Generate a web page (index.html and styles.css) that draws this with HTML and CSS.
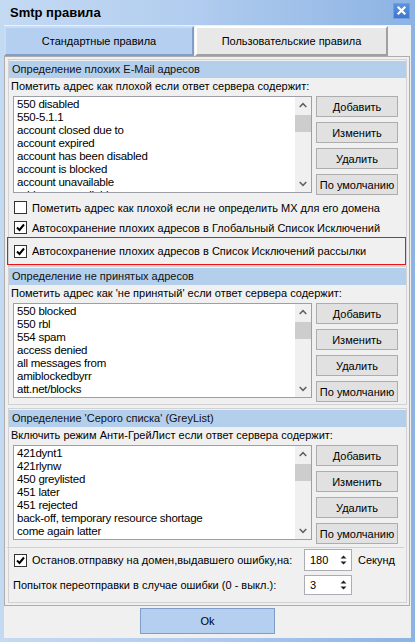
FILE: index.html
```html
<!DOCTYPE html>
<html lang="ru">
<head>
<meta charset="utf-8">
<title>Smtp правила</title>
<link rel="stylesheet" href="styles.css">
</head>
<body>
<div class="window">
  <div class="titlebar">
    <span class="title">Smtp правила</span>
    <span class="close">
      <svg width="17" height="16" viewBox="0 0 17 16"><path d="M5.5 4.5 L11.5 10.5 M11.5 4.5 L5.5 10.5" stroke="#fff" stroke-width="2.2" stroke-linecap="square"/></svg>
    </span>
  </div>
  <div class="client">
    <div class="tabs">
      <div class="tab tab-active">Стандартные правила</div>
      <div class="tab">Пользовательские правила</div>
    </div>
    <div class="page">
      <section class="group g1">
        <div class="ghead">Определение плохих E-Mail адресов</div>
        <div class="glabel">Пометить адрес как плохой если ответ сервера содержит:</div>
        <div class="listrow">
          <div class="listbox lb1">
            <ul class="items">
              <li>550 disabled</li>
              <li>550-5.1.1</li>
              <li>account closed due to</li>
              <li>account expired</li>
              <li>account has been disabled</li>
              <li>account is blocked</li>
              <li>account unavailable</li>
              <li>address unavailable</li>
            </ul>
            <div class="scroll">
              <svg class="chev" width="17" height="17" viewBox="0 0 17 17"><path d="M5 10 L8.5 6.5 L12 10" fill="none" stroke="#606060" stroke-width="1.6"/></svg>
              <div class="thumb"></div>
              <div class="track"></div>
              <svg class="chev" width="17" height="17" viewBox="0 0 17 17"><path d="M5 7 L8.5 10.5 L12 7" fill="none" stroke="#606060" stroke-width="1.6"/></svg>
            </div>
          </div>
          <div class="buttons">
            <button class="btn">Добавить</button>
            <button class="btn">Изменить</button>
            <button class="btn">Удалить</button>
            <button class="btn">По умолчанию</button>
          </div>
        </div>
        <label class="check row1"><span class="cb"></span>Пометить адрес как плохой если не определить MX для его домена</label>
        <label class="check row2"><span class="cb"><svg width="11" height="11" viewBox="0 0 11 11"><path d="M2 5.5 L4.5 8 L9 2.5" fill="none" stroke="#000" stroke-width="2"/></svg></span>Автосохранение плохих адресов в Глобальный Список Исключений</label>
        <label class="check hl"><span class="cb"><svg width="11" height="11" viewBox="0 0 11 11"><path d="M2 5.5 L4.5 8 L9 2.5" fill="none" stroke="#000" stroke-width="2"/></svg></span>Автосохранение плохих адресов в Список Исключений рассылки</label>
      </section>

      <section class="group g2">
        <div class="ghead">Определение не принятых адресов</div>
        <div class="glabel">Пометить адрес как 'не принятый' если ответ сервера содержит:</div>
        <div class="listrow">
          <div class="listbox lb2">
            <ul class="items">
              <li>550 blocked</li>
              <li>550 rbl</li>
              <li>554 spam</li>
              <li>access denied</li>
              <li>all messages from</li>
              <li>amiblockedbyrr</li>
              <li>att.net/blocks</li>
              <li>banned by policy</li>
            </ul>
            <div class="scroll">
              <svg class="chev" width="17" height="17" viewBox="0 0 17 17"><path d="M5 10 L8.5 6.5 L12 10" fill="none" stroke="#606060" stroke-width="1.6"/></svg>
              <div class="thumb"></div>
              <div class="track"></div>
              <svg class="chev" width="17" height="17" viewBox="0 0 17 17"><path d="M5 7 L8.5 10.5 L12 7" fill="none" stroke="#606060" stroke-width="1.6"/></svg>
            </div>
          </div>
          <div class="buttons">
            <button class="btn">Добавить</button>
            <button class="btn">Изменить</button>
            <button class="btn">Удалить</button>
            <button class="btn">По умолчанию</button>
          </div>
        </div>
      </section>

      <section class="group g3">
        <div class="ghead">Определение 'Серого списка' (GreyList)</div>
        <div class="glabel">Включить режим Анти-ГрейЛист если ответ сервера содержит:</div>
        <div class="listrow">
          <div class="listbox lb3">
            <ul class="items">
              <li>421dynt1</li>
              <li>421rlynw</li>
              <li>450 greylisted</li>
              <li>451 later</li>
              <li>451 rejected</li>
              <li>back-off, temporary resource shortage</li>
              <li>come again latter</li>
              <li>deferred</li>
            </ul>
            <div class="scroll">
              <svg class="chev" width="17" height="17" viewBox="0 0 17 17"><path d="M5 10 L8.5 6.5 L12 10" fill="none" stroke="#606060" stroke-width="1.6"/></svg>
              <div class="thumb"></div>
              <div class="track"></div>
              <svg class="chev" width="17" height="17" viewBox="0 0 17 17"><path d="M5 7 L8.5 10.5 L12 7" fill="none" stroke="#606060" stroke-width="1.6"/></svg>
            </div>
          </div>
          <div class="buttons">
            <button class="btn">Добавить</button>
            <button class="btn">Изменить</button>
            <button class="btn">Удалить</button>
            <button class="btn">По умолчанию</button>
          </div>
        </div>
        <div class="sep"></div>
        <div class="spinrow sr1">
          <label class="spinlabel"><span class="cb"><svg width="11" height="11" viewBox="0 0 11 11"><path d="M2 5.5 L4.5 8 L9 2.5" fill="none" stroke="#000" stroke-width="2"/></svg></span>Останов.отправку на домен,выдавшего ошибку,на:</label>
          <div class="spin sp1"><span class="spinval">180</span><span class="arrows"><svg width="9" height="14" viewBox="0 0 9 14"><path d="M1.5 5.5 L4.5 2.5 L7.5 5.5 Z M1.5 8.5 L4.5 11.5 L7.5 8.5 Z" fill="#222"/></svg></span></div>
          <span class="unit">Секунд</span>
        </div>
        <div class="spinrow sr2">
          <label class="spinlabel">Попыток переотправки в случае ошибки (0 - выкл.):</label>
          <div class="spin sp2"><span class="spinval">3</span><span class="arrows"><svg width="9" height="14" viewBox="0 0 9 14"><path d="M1.5 5.5 L4.5 2.5 L7.5 5.5 Z M1.5 8.5 L4.5 11.5 L7.5 8.5 Z" fill="#222"/></svg></span></div>
        </div>
      </section>
    </div>
    <div class="footer">
      <button class="ok">Ok</button>
    </div>
  </div>
</div>
</body>
</html>
```

FILE: styles.css
```css
* { box-sizing: border-box; }
html, body { margin: 0; padding: 0; }
body {
  width: 415px;
  height: 642px;
  overflow: hidden;
  font-family: "Liberation Sans", Arial, sans-serif;
  font-size: 11px;
  color: #000;
}
.window {
  width: 415px;
  height: 642px;
  background: linear-gradient(to right, #c4daf3 0%, #b2cdef 45%, #8cb3e3 100%);
  display: flex;
  flex-direction: column;
}
.titlebar {
  height: 25px;
  display: flex;
  align-items: center;
  justify-content: space-between;
  padding: 0 5px 0 10px;
}
.title {
  font-weight: bold;
  font-size: 13px;
  color: #000;
  margin-top: -1px;
}
.close {
  width: 17px;
  height: 16px;
  margin-top: -3px;
  background: linear-gradient(#5a93e2, #3f76cf);
  border: 1px solid #6f9fe0;
  display: flex;
}
.close svg { margin: -1px; }
.client {
  margin: 0 4px 4px 4px;
  height: 613px;
  background: #f0f0f0;
  display: flex;
  flex-direction: column;
}
.tabs {
  display: flex;
  margin-top: 1px;
  height: 30px;
}
.tab {
  height: 30px;
  display: flex;
  align-items: center;
  justify-content: center;
  border: 2px solid;
  border-color: #ffffff #a0a0a0 #a0a0a0 #ffffff;
  background: #e8e8e8;
  width: 193px;
  margin-left: 1px;
}
.tab-active {
  width: 190px;
  margin-left: 0;
  background: #b4cfef;
  border-color: #c9dcf4 #819fc6 #819fc6 #c9dcf4;
}
.page {
  height: 550px;
  width: 406px;
  border: 1px solid #adadad;
  padding: 2px 2px 2px 3px;
  display: flex;
  flex-direction: column;
}
.group {
  width: 399px;
  border: 1px solid #d2d2d2;
  padding-top: 1px;
  display: flex;
  flex-direction: column;
}
.g1 { height: 207px; }
.g2 { height: 139px; }
.g3 { height: 195px; margin-top: 3px; }
.ghead {
  height: 17px;
  line-height: 17px;
  background: #b4cfec;
  padding-left: 3px;
  color: #111;
  white-space: nowrap;
}
.glabel {
  height: 18px;
  line-height: 17px;
  padding-left: 2px;
  white-space: nowrap;
}
.listrow {
  display: flex;
  gap: 4px;
  padding-left: 4px;
}
.g1 .listrow { height: 100px; }
.g2 .listrow { height: 101px; }
.g3 .listrow { height: 99px; }
.listbox {
  width: 299px;
  height: 97px;
  border: 1px solid #9c9fa6;
  background: #fff;
  display: flex;
  overflow: hidden;
}
.lb2, .lb3 { height: 95px; }
.items {
  list-style: none;
  margin: 0;
  padding: 1px 0 0 3px;
  flex: 1;
  font-size: 11.5px;
  letter-spacing: -0.25px;
  line-height: 13px;
  overflow: hidden;
}
.items li { height: 13px; white-space: nowrap; }
.scroll {
  width: 16px;
  background: #f0f0f0;
  display: flex;
  flex-direction: column;
  align-items: center;
}
.chev { flex: none; width: 16px; height: 17px; }
.thumb {
  width: 16px;
  height: 17px;
  margin-top: 1px;
  background: #cdcdcd;
}
.track { flex: 1; }
.buttons {
  display: flex;
  flex-direction: column;
  gap: 5px;
  width: 82px;
}
.btn {
  height: 21px;
  width: 82px;
  padding: 0;
  margin: 0;
  font: inherit;
  color: #000;
  background: #e1e1e1;
  border: 1px solid #adadad;
  white-space: nowrap;
  overflow: hidden;
}
.check {
  display: flex;
  align-items: center;
  padding-left: 5px;
  white-space: nowrap;
}
.row1 { height: 22px; padding-top: 1px; }
.row2 { height: 19px; }
.hl {
  height: 28px;
  margin-left: -2px;
  padding-left: 6px;
  border: 1px solid #e8161b;
}
.cb {
  width: 13px;
  height: 13px;
  flex: none;
  border: 1px solid #333;
  background: #fff;
  margin-right: 5px;
  display: flex;
  align-items: center;
  justify-content: center;
}
.sep {
  height: 1px;
  margin: 3px 2px 0 -2px;
  background: #d0d0d0;
}
.spinrow {
  display: flex;
  align-items: center;
  padding-left: 4px;
}
.sr1 { height: 24px; }
.sr2 { height: 26px; }
.spinlabel {
  width: 291px;
  display: flex;
  align-items: center;
  white-space: nowrap;
}
.sr1 .spinlabel { padding-left: 1px; }
.spin {
  width: 48px;
  background: #fff;
  border: 1px solid #abadb3;
  display: flex;
  align-items: center;
  justify-content: space-between;
  padding: 0 3px 0 5px;
}
.sp1 { height: 22px; }
.sp2 { height: 20px; }
.arrows { display: flex; }
.unit { margin-left: 6px; }
.footer {
  height: 32px;
  padding-top: 2px;
  display: flex;
  justify-content: center;
}
.ok {
  width: 135px;
  height: 26px;
  padding: 0;
  margin: 0;
  font: inherit;
  color: #000;
  background: #b4cfef;
  border: 1px solid #7f9dc6;
}
```
